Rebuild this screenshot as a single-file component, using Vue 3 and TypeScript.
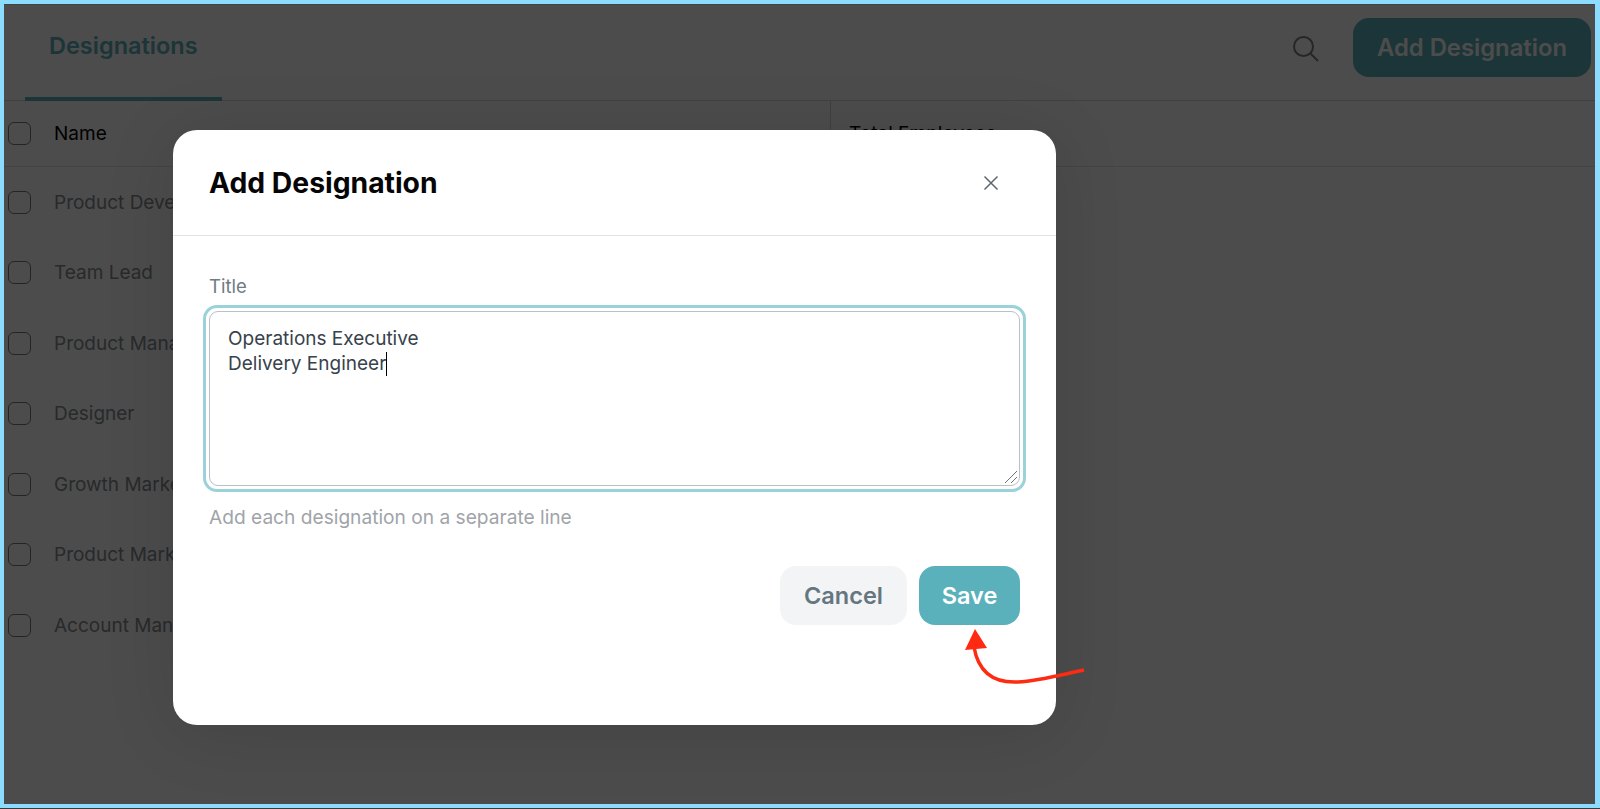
<template>
  <div class="frame">
    <div class="page">
      <header class="topbar">
        <div class="tab">Designations</div>
        <div class="actions">
          <svg class="search" width="28" height="28" viewBox="0 0 28 28" fill="none" aria-hidden="true">
            <circle cx="11.5" cy="11.5" r="9.5" />
            <path d="M18.5 18.5 26 26" />
          </svg>
          <button class="add-btn" type="button">Add Designation</button>
        </div>
      </header>
      <div class="table-head">
        <span class="check"></span>
        <span class="col-name">Name</span>
        <span class="col-total">Total Employees</span>
      </div>
      <div v-for="row in rows" :key="row" class="row">
        <span class="check"></span>
        <span class="cell">{{ row }}</span>
      </div>
    </div>

    <div class="overlay">
      <div class="modal" role="dialog" aria-modal="true" aria-label="Add Designation">
        <div class="modal-head">
          <h2>Add Designation</h2>
          <svg class="close" width="16" height="16" viewBox="0 0 16 16" fill="none" aria-hidden="true">
            <path d="M1.5 1.5 14.5 14.5M14.5 1.5 1.5 14.5" />
          </svg>
        </div>
        <div class="modal-body">
          <label class="label">Title</label>
          <div class="ring">
            <div class="input" role="textbox" aria-multiline="true">
              <div v-for="(line, i) in lines" :key="line">{{ line }}<span v-if="i === lines.length - 1" class="caret"></span></div>
              <svg class="grip" width="14" height="14" viewBox="0 0 14 14" fill="none" aria-hidden="true">
                <path d="M1 13 13 1M7 13 13 7" />
              </svg>
            </div>
          </div>
          <p class="hint">Add each designation on a separate line</p>
          <div class="buttons">
            <button class="btn cancel" type="button">Cancel</button>
            <button class="btn save" type="button">Save</button>
          </div>
        </div>
      </div>
    </div>

    <svg class="arrow" width="140" height="70" viewBox="0 0 140 70" fill="none" aria-hidden="true">
      <path class="arrow-line" d="M132 41C104 47 86 52 66 53C46 54 27 47 22 18" />
      <path class="arrow-head" d="M23 0 35 19 13 21Z" />
    </svg>
  </div>
</template>

<script setup lang="ts">
const rows: string[] = [
  'Product Developer',
  'Team Lead',
  'Product Manager',
  'Designer',
  'Growth Marketer',
  'Product Marketer',
  'Account Manager',
]

const lines: string[] = ['Operations Executive', 'Delivery Engineer']
</script>

<style>
html,
body {
  margin: 0;
  background: #3a3a3a;
}
</style>

<style scoped>
.frame {
  position: relative;
  box-sizing: border-box;
  width: 1600px;
  height: 808px;
  border: solid #8bdcff;
  border-width: 4px 5px 4px 4px;
  overflow: hidden;
  font-family: Inter, 'Noto Sans', sans-serif;
}

.page {
  height: 100%;
  background: #fff;
  border-top: 1px solid #ddd;
}

.topbar {
  box-sizing: border-box;
  height: 96px;
  display: flex;
  justify-content: space-between;
  border-bottom: 1px solid #d8d8d8;
}

.tab {
  box-sizing: border-box;
  width: 197px;
  height: 96px;
  margin-left: 21px;
  padding: 26px 0 0 24px;
  border-bottom: 4px solid #5ab1bc;
  color: #5ab1bc;
  font-size: 23.5px;
  font-weight: 600;
}

.actions {
  display: flex;
  align-items: flex-start;
  gap: 33px;
  padding: 13px 4px 0 0;
}

.search {
  margin-top: 17px;
}

.search circle,
.search path {
  stroke: #7f7f7f;
  stroke-width: 2;
}

.add-btn {
  width: 238px;
  height: 59px;
  padding: 0;
  border: 0;
  border-radius: 16px;
  background: #5ab1bc;
  color: #fff;
  font: 600 23.8px Inter, 'Noto Sans', sans-serif;
}

.table-head,
.row {
  display: flex;
  align-items: center;
  padding-left: 4px;
}

.table-head {
  height: 65px;
  border-bottom: 1px solid #e4e4e4;
}

.row {
  height: 70.5px;
}

.check {
  box-sizing: border-box;
  flex: none;
  width: 23px;
  height: 23px;
  border: 1.5px solid #7c7c7c;
  border-radius: 6px;
}

.col-name,
.cell {
  margin-left: 23px;
  font-size: 19px;
}

.col-name {
  width: 776px;
  color: #000;
}

.cell {
  color: #858c92;
}

.col-total {
  align-self: stretch;
  display: flex;
  align-items: center;
  padding-left: 18px;
  border-left: 1px solid #d8d8d8;
  color: #000;
  font-size: 19px;
}

.overlay {
  position: absolute;
  inset: 0;
  padding: 126px 0 0 169px;
  background: rgba(0, 0, 0, 0.7);
}

.modal {
  box-sizing: border-box;
  width: 883px;
  height: 595px;
  border-radius: 24px;
  background: #fff;
  box-shadow: 0 8px 70px rgba(0, 0, 0, 0.12);
}

.modal-head {
  box-sizing: border-box;
  height: 106px;
  display: flex;
  align-items: center;
  justify-content: space-between;
  padding: 0 57px 0 36px;
  border-bottom: 1px solid #e1e3e5;
}

.modal-head h2 {
  margin: 0;
  color: #050505;
  font-size: 28.3px;
  font-weight: 700;
}

.close path {
  stroke: #5a6872;
  stroke-width: 1.5;
}

.modal-body {
  padding: 38px 30px 0 36px;
}

.label {
  display: block;
  color: #6f7a82;
  font-size: 18.5px;
  line-height: 24px;
}

.ring {
  box-sizing: border-box;
  height: 187px;
  margin: 7px 0 0 -6px;
  padding: 3px;
  border: 3px solid #9bd2da;
  border-radius: 14px;
}

.input {
  position: relative;
  box-sizing: border-box;
  height: 100%;
  padding: 14px 18px;
  border: 1px solid #b9c0c6;
  border-radius: 9px;
  color: #37424b;
  font-size: 19px;
  line-height: 25px;
}

.caret {
  display: inline-block;
  width: 1px;
  height: 24px;
  vertical-align: -6px;
  background: #000;
}

.grip {
  position: absolute;
  right: 1px;
  bottom: 1px;
}

.grip path {
  stroke: #6f7479;
  stroke-width: 1;
}

.hint {
  margin: 13px 0 0;
  color: #a0a4a8;
  font-size: 19.15px;
  line-height: 24px;
}

.buttons {
  display: flex;
  justify-content: flex-end;
  gap: 12px;
  margin: 37px 6px 0 0;
}

.btn {
  height: 59px;
  padding: 0;
  border: 0;
  border-radius: 16px;
  font: 600 23.5px Inter, 'Noto Sans', sans-serif;
}

.cancel {
  width: 127px;
  background: #f3f4f6;
  color: #64767f;
}

.save {
  width: 101px;
  background: #5ab1bc;
  color: #fff;
}

.arrow {
  position: absolute;
  left: 948px;
  top: 625px;
}

.arrow-line {
  stroke: #ff2a12;
  stroke-width: 3.5;
}

.arrow-head {
  fill: #ff2a12;
}
</style>
